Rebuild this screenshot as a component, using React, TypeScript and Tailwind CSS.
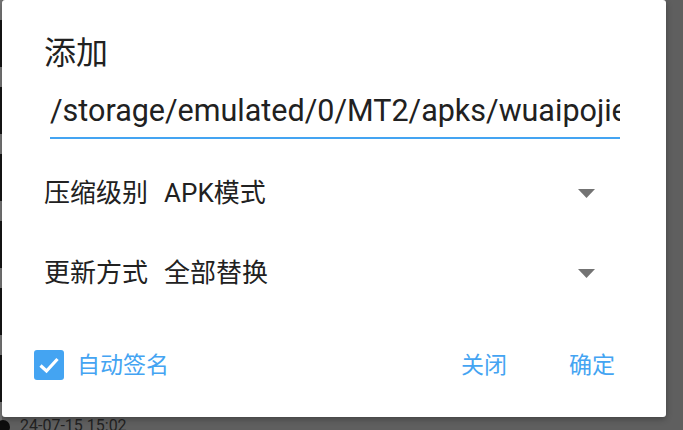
import React from "react";

const FONT = { fontFamily: "Roboto, 'Noto Sans CJK SC', sans-serif" };

function Caret() {
  return (
    <svg width="17" height="9" viewBox="0 0 17 9">
      <path d="M0 0 L17 0 L8.5 9 Z" fill="#737373" />
    </svg>
  );
}

function Row({ label, value }: { label: string; value: string }) {
  return (
    <div className="flex h-[80px] items-center justify-between pl-[42px] pr-[71px]">
      <div className="flex items-center text-[26px] leading-none text-[#212121]">
        <span>{label}</span>
        <span className="ml-[16px]">{value}</span>
      </div>
      <Caret />
    </div>
  );
}

export default function App() {
  const rows = [0, 1, 2, 3, 4, 5, 6];
  return (
    <div className="relative h-[430px] w-[683px] overflow-hidden bg-[#5f5f5f]" style={FONT}>
      {/* background list (dimmed) */}
      <div className="flex flex-col">
        {rows.map((r) => (
          <div key={r} className="flex h-[67px] flex-col">
            <div className="h-[20px] w-[2px] bg-[#777777]" />
            <div className="h-[47px] w-[2px] bg-[#161616]" />
          </div>
        ))}
      </div>
      <div className="absolute bottom-0 left-0 right-0 flex h-[13px] items-start">
        <div className="ml-[-4px] mt-[3px] h-[14px] w-[14px] rounded-full bg-[#0d0d0d]" />
        <span className="ml-[10px] mt-[1px] text-[16px] leading-none text-[#222222]">24-07-15 15:02</span>
      </div>

      {/* dialog */}
      <div className="absolute left-[2px] top-0 flex h-[417px] w-[664px] flex-col rounded-[3px] bg-white shadow-[0_2px_6px_rgba(0,0,0,0.3)]">
        <div className="pl-[42px] pt-[37px] text-[32px] leading-none text-[#212121]">添加</div>
        <div className="ml-[48px] mr-[46px] mt-[24px] border-b-2 border-[#44a4f2] pb-[8px]">
          <div className="overflow-hidden whitespace-nowrap text-[30.5px] leading-[36px] text-[#212121]">
            /storage/emulated/0/MT2/apks/wuaipojie.apk
          </div>
        </div>
        <div className="mt-[14px] flex flex-col">
          <Row label="压缩级别" value="APK模式" />
          <Row label="更新方式" value="全部替换" />
        </div>
        <div className="flex flex-1 items-center justify-between pl-[32px] pr-[51px]">
          <div className="flex items-center">
            <div className="flex h-[30px] w-[30px] items-center justify-center rounded-[3px] bg-[#44a4f2]">
              <svg width="22" height="18" viewBox="0 0 22 18">
                <path d="M2.5 9.5 L8.5 15 L19.5 3" fill="none" stroke="white" strokeWidth="3.2" />
              </svg>
            </div>
            <span className="ml-[13px] text-[23px] leading-none text-[#44a4f2]">自动签名</span>
          </div>
          <div className="flex items-center gap-[62px] text-[23px] leading-none text-[#44a4f2]">
            <span>关闭</span>
            <span>确定</span>
          </div>
        </div>
      </div>
    </div>
  );
}
